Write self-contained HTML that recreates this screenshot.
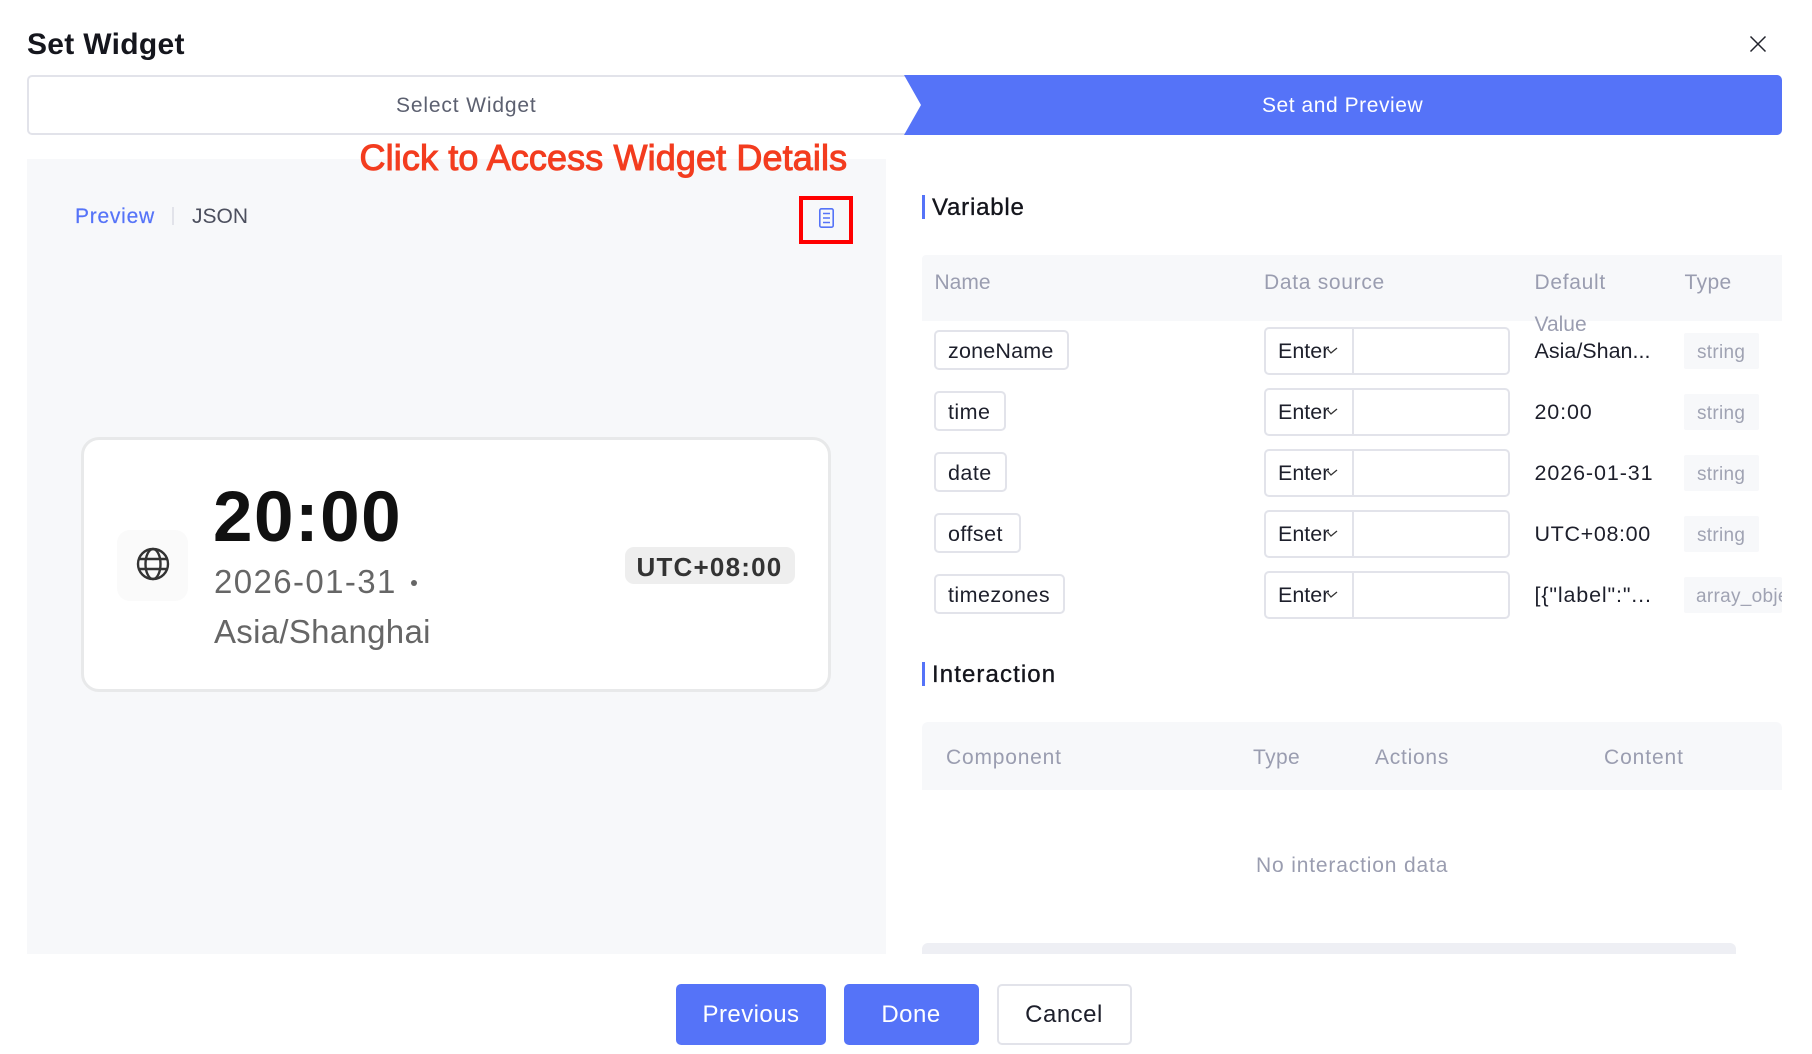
<!DOCTYPE html>
<html lang="en">
<head>
<meta charset="utf-8">
<title>Set Widget</title>
<style>
html,body{margin:0;padding:0;background:#fff}
body{position:relative;width:1812px;height:1054px;overflow:hidden;font-family:"Liberation Sans",Arial,sans-serif;color:#1d1f2b}
.a{position:absolute;box-sizing:border-box}
.t{position:absolute;white-space:nowrap;height:30px;line-height:30px}
.h{font-size:21px;color:#9a9db0}
.pill{position:absolute;left:934px;height:40px;box-sizing:border-box;border:2px solid #e2e3ea;border-radius:5px;background:#fff;font-size:21.5px;line-height:38px;padding-left:12px;letter-spacing:.45px;color:#1d1f2b}
.sel{position:absolute;left:1264px;width:91px;height:48px;box-sizing:border-box;border:2px solid #e2e3ea;border-right-width:3px;border-radius:5px 0 0 5px;background:#fff;font-size:21.5px;line-height:44px;padding-left:12px;color:#1d1f2b}
.sel span{display:block;width:51px;overflow:hidden;white-space:nowrap}
.inp{position:absolute;left:1354px;width:156px;height:48px;box-sizing:border-box;border:2px solid #e2e3ea;border-left:0;border-radius:0 5px 5px 0;background:#fff}
.chev{position:absolute;left:1326px;width:12px;height:8px}
.val{position:absolute;left:1534.5px;height:30px;line-height:30px;font-size:21.5px;white-space:nowrap;color:#1d1f2b}
.tag{position:absolute;left:1684px;width:75px;height:36px;background:#f7f8fa;border-radius:2px;font-size:19px;line-height:39px;padding-left:13px;box-sizing:border-box;color:#a0a3b3;letter-spacing:.3px;white-space:nowrap;overflow:hidden}
.btn{position:absolute;top:984px;height:61px;box-sizing:border-box;border-radius:5px;font-size:24px;line-height:61px;text-align:center;color:#fff;background:#5573f8}
.bar{position:absolute;left:922px;width:3px;background:#5573f8}
.sec{position:absolute;left:932px;font-size:24px;height:30px;line-height:30px;color:#14151c;-webkit-text-stroke:.35px #14151c;white-space:nowrap}
</style>
</head>
<body>

<div class="t" style="left:27px;top:29px;height:32px;line-height:32px;font-size:30px;font-weight:700;letter-spacing:.3px;color:#15161d">Set Widget</div>
<svg class="a" style="left:1749px;top:35px" width="18" height="18" viewBox="0 0 18 18"><path d="M1.5 1.5L16.5 16.5M16.5 1.5L1.5 16.5" stroke="#22232c" stroke-width="1.5" fill="none"/></svg>

<div class="a" style="left:27px;top:75px;width:885px;height:60px;border:2px solid #e2e3ea;border-right:0;border-radius:5px 0 0 5px;background:#fff"></div>
<svg class="a" style="left:900px;top:75px" width="882" height="60" viewBox="0 0 882 60"><path d="M4 0H877a5 5 0 0 1 5 5V55a5 5 0 0 1-5 5H4L21 30Z" fill="#5573f8"/></svg>
<div class="t" style="left:396px;top:90.5px;font-size:21px;letter-spacing:.85px;color:#5c6070">Select Widget</div>
<div class="t" style="left:1262px;top:90.5px;font-size:21px;letter-spacing:.55px;color:#fff">Set and Preview</div>

<div class="a" style="left:27px;top:159px;width:859px;height:795px;background:#f7f8fa"></div>
<div class="t" style="left:359.5px;top:137px;height:42px;line-height:42px;font-size:36px;letter-spacing:.12px;color:#f33c1f;-webkit-text-stroke:1px #f33c1f">Click to Access Widget Details</div>

<div class="t" style="left:75px;top:201.5px;font-size:21px;letter-spacing:.75px;color:#5573f8;-webkit-text-stroke:.2px #5573f8">Preview</div>
<div class="a" style="left:172px;top:207px;width:2px;height:18px;background:#e2e3ea"></div>
<div class="t" style="left:192px;top:201.5px;font-size:21px;color:#4c4f5e">JSON</div>

<div class="a" style="left:799px;top:196px;width:54px;height:48px;border:4px solid #f00"></div>
<svg class="a" style="left:818px;top:207px" width="17" height="22" viewBox="0 0 17 22"><rect x="1.8" y="1.8" width="13.4" height="18.4" rx="1.6" fill="none" stroke="#5573f8" stroke-width="1.6"/><path d="M5 6.5H12M5 11H12M5 15.5H12" stroke="#5573f8" stroke-width="1.6" fill="none"/></svg>

<div class="a" style="left:81px;top:437px;width:750px;height:255px;background:#fff;border:3px solid #e8e9ea;border-radius:18px"></div>
<div class="a" style="left:117px;top:530px;width:71px;height:71px;background:#fafafa;border-radius:13px"></div>
<svg class="a" style="left:134.5px;top:546px" width="36" height="36" viewBox="0 0 36 36"><g fill="none" stroke="#333" stroke-width="2.4"><circle cx="18" cy="18" r="15"/><ellipse cx="18" cy="18" rx="7.5" ry="15"/><path d="M4.5 13H31.5M4.5 23H31.5"/></g></svg>
<div class="t" style="left:213px;top:478px;height:80px;line-height:80px;font-size:71px;font-weight:700;letter-spacing:1.5px;color:#111">20:00</div>
<div class="t" style="left:214px;top:562px;height:40px;line-height:40px;font-size:33px;letter-spacing:1.4px;color:#666">2026-01-31</div>
<div class="a" style="left:411px;top:580px;width:6px;height:6px;border-radius:50%;background:#666"></div>
<div class="t" style="left:214px;top:611.5px;height:40px;line-height:40px;font-size:33px;letter-spacing:.3px;color:#666">Asia/Shanghai</div>
<div class="a" style="left:625px;top:547px;width:170px;height:37px;background:#eeeeee;border-radius:9px"></div>
<div class="t" style="left:636.5px;top:552px;font-size:26px;font-weight:700;letter-spacing:1.2px;color:#333">UTC+08:00</div>

<div class="bar" style="top:195px;height:24px"></div>
<div class="sec" style="top:193px;letter-spacing:.8px">Variable</div>

<div class="a" style="left:922px;top:255px;width:860px;height:66px;background:#f7f8fa;border-radius:4px 0 0 0"></div>
<div class="t h" style="left:934.5px;top:268px">Name</div>
<div class="t h" style="left:1264px;top:268px;letter-spacing:.7px">Data source</div>
<div class="t h" style="left:1534.5px;top:268px;letter-spacing:.7px">Default</div>
<div class="t h" style="left:1534.5px;top:310px">Value</div>
<div class="t h" style="left:1684.5px;top:268px;letter-spacing:.4px">Type</div>

<!-- row 1 -->
<div class="pill" style="top:330px;width:135px;letter-spacing:.2px">zoneName</div>
<div class="sel" style="top:327px"><span>Enter</span></div><div class="inp" style="top:327px"></div>
<svg class="chev" style="top:347px" viewBox="0 0 12 8"><path d="M1.5 2L5 6L11 1" fill="none" stroke="#333" stroke-width="1.3"/></svg>
<div class="val" style="top:336px">Asia/Shan...</div>
<div class="tag" style="top:333px">string</div>
<!-- row 2 -->
<div class="pill" style="top:391px;width:72px">time</div>
<div class="sel" style="top:388px"><span>Enter</span></div><div class="inp" style="top:388px"></div>
<svg class="chev" style="top:408px" viewBox="0 0 12 8"><path d="M1.5 2L5 6L11 1" fill="none" stroke="#333" stroke-width="1.3"/></svg>
<div class="val" style="top:397px;letter-spacing:.85px">20:00</div>
<div class="tag" style="top:394px">string</div>
<!-- row 3 -->
<div class="pill" style="top:452px;width:73px">date</div>
<div class="sel" style="top:449px"><span>Enter</span></div><div class="inp" style="top:449px"></div>
<svg class="chev" style="top:469px" viewBox="0 0 12 8"><path d="M1.5 2L5 6L11 1" fill="none" stroke="#333" stroke-width="1.3"/></svg>
<div class="val" style="top:458px;letter-spacing:.9px">2026-01-31</div>
<div class="tag" style="top:455px">string</div>
<!-- row 4 -->
<div class="pill" style="top:513px;width:87px">offset</div>
<div class="sel" style="top:510px"><span>Enter</span></div><div class="inp" style="top:510px"></div>
<svg class="chev" style="top:530px" viewBox="0 0 12 8"><path d="M1.5 2L5 6L11 1" fill="none" stroke="#333" stroke-width="1.3"/></svg>
<div class="val" style="top:519px;letter-spacing:.65px">UTC+08:00</div>
<div class="tag" style="top:516px">string</div>
<!-- row 5 -->
<div class="pill" style="top:574px;width:131px">timezones</div>
<div class="sel" style="top:571px"><span>Enter</span></div><div class="inp" style="top:571px"></div>
<svg class="chev" style="top:591px" viewBox="0 0 12 8"><path d="M1.5 2L5 6L11 1" fill="none" stroke="#333" stroke-width="1.3"/></svg>
<div class="val" style="top:580px;letter-spacing:.85px">[{"label":"...</div>
<div class="tag" style="top:577px;width:98px;padding-left:12px">array_object</div>

<div class="bar" style="top:662px;height:24px"></div>
<div class="sec" style="top:660px;letter-spacing:1.1px">Interaction</div>

<div class="a" style="left:922px;top:722px;width:860px;height:68px;background:#f7f8fa;border-radius:6px 6px 0 0"></div>
<div class="t h" style="left:946px;top:743px;letter-spacing:.8px">Component</div>
<div class="t h" style="left:1253px;top:743px;letter-spacing:.4px">Type</div>
<div class="t h" style="left:1375px;top:743px;letter-spacing:.75px">Actions</div>
<div class="t h" style="left:1604px;top:743px;letter-spacing:.9px">Content</div>
<div class="t h" style="left:1256px;top:851px;letter-spacing:.84px">No interaction data</div>
<div class="a" style="left:922px;top:943px;width:814px;height:11px;background:#eeeff4;border-radius:6px 6px 0 0"></div>

<div class="btn" style="left:676px;width:150px;letter-spacing:.45px">Previous</div>
<div class="btn" style="left:844px;width:135px;letter-spacing:.5px;text-indent:-1px">Done</div>
<div class="btn" style="left:997px;width:135px;background:#fff;border:2px solid #e2e3ea;line-height:57px;color:#1d1f2b;letter-spacing:.5px;text-indent:-1px">Cancel</div>

</body>
</html>
